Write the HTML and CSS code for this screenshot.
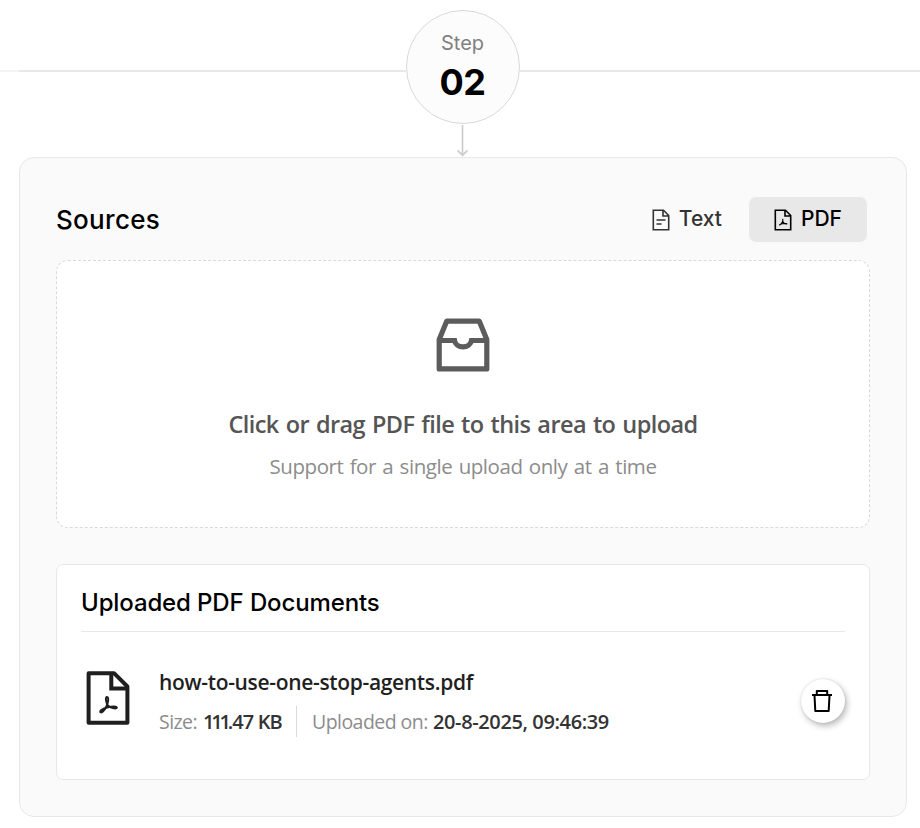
FILE: index.html
```
<!DOCTYPE html>
<html lang="en">
<head>
  <meta charset="UTF-8" />
  <meta name="viewport" content="width=device-width, initial-scale=1.0" />
  <title>Sources</title>
  <link rel="stylesheet" href="styles.css">
</head>
<body>
  <header class="step">
    <div class="step-line"></div>
    <div class="step-circle">
      <span class="step-label">Step</span>
      <span class="step-number">02</span>
    </div>
    <div class="step-line"></div>
  </header>
  <svg class="arrow" width="15" height="32" viewBox="0 0 15 32" fill="none" stroke="#cdcdcd" stroke-width="1.7">
    <path d="M7.5 0v30M2.500 25.300l5 4.900 5-4.900" />
  </svg>

  <main class="panel">
    <div class="panel-header">
      <h2>Sources</h2>
      <div class="tabs">
        <button class="tab" type="button">
          <svg width="18" height="22" viewBox="0 0 18 22" fill="none" stroke="currentColor" stroke-width="1.6">
            <path d="M1.3 1.3h10.2l5.2 5.2v14.2H1.3zM11 1.3v5.7h5.7M4.5 11h9M4.5 15h5" />
          </svg>
          <span class="tab-text">Text</span>
        </button>
        <button class="tab active" type="button">
          <svg width="18" height="22" viewBox="0 0 18 22" fill="none" stroke="currentColor" stroke-width="1.6">
            <path d="M1.3 1.3h10.2l5.2 5.2v14.2H1.3zM11 1.3v5.7h5.7" />
            <path d="M8.7 9.8c.6 2.300 0 4.200-3.500 6.500M8.800 12.400c.8 1.700 2 2.500 4.500 2.500M5.800 15.500c2-.9 4-1.300 7-.9" stroke-width="1.100" />
          </svg>
          <span class="tab-text">PDF</span>
        </button>
      </div>
    </div>

    <section class="dropzone">
      <svg class="inbox" width="54" height="54" viewBox="0 0 54 54" fill="none" stroke="#5c5c5c" stroke-width="5.2" stroke-linejoin="round">
        <path d="M3.200 21.500L10.800 3.100h32.400l7.600 18.400v29.400H3.200z" />
        <path d="M3.200 22.500h15.300a8.600 7.600 0 0 0 17 0h15.300" stroke-linejoin="miter" />
      </svg>
      <p class="drop-title">Click or drag PDF file to this area to upload</p>
      <p class="drop-hint">Support for a single upload only at a time</p>
    </section>

    <section class="documents">
      <h3>Uploaded PDF Documents</h3>
      <div class="doc">
        <svg class="doc-icon" width="44" height="54" viewBox="0 0 44 54" fill="none" stroke="#1f1f1f" stroke-width="4" stroke-linejoin="round">
          <path d="M2.600 2.200h25.400l13.400 13.300v36.300H2.600z" />
          <path d="M25.300 2.200v15.300h16.100" stroke-linejoin="miter" />
          <path d="M21.800 34.500c-2.200-4-2.500-8.500-.8-8.500 1.900 0 1.500 5.500-.8 9.700-2 4-4.300 6.500-5.700 5.500-1.300-1.200 2-3.300 7.300-4.900 4.300-1.200 8.900-1.300 9 .300.100 1.500-5.200 1.100-9-2.100z" stroke-width="2" />
        </svg>
        <div class="doc-info">
          <p class="doc-name">how-to-use-one-stop-agents.pdf</p>
          <div class="doc-meta">
            <span class="meta-label">Size:</span>
            <span class="meta-value size"><span class="ones">111</span>.47 KB</span>
            <span class="divider"></span>
            <span class="meta-label uploaded">Uploaded on:</span>
            <span class="meta-value">20-8-2025, 09:46:39</span>
          </div>
        </div>
        <button class="delete" type="button" aria-label="Delete">
          <svg width="22" height="24" viewBox="0 0 22 24" fill="none" stroke="#000" stroke-width="2" stroke-linejoin="round">
            <path d="M1 6h20M5.800 6V2h10.400v4M3.500 6.500L4.300 22h13.400l.800-15.500" />
          </svg>
        </button>
      </div>
    </section>
  </main>
</body>
</html>
```

FILE: styles.css
```
* {
  box-sizing: border-box;
}
body {
  margin: 0;
  background: #fff;
  color: #000;
  font-family: 'Open Sans', sans-serif;
}
h2, h3, p {
  margin: 0;
}
button {
  border: none;
  padding: 0;
  cursor: pointer;
}
svg {
  display: block;
  flex-shrink: 0;
}

/* step marker */
.step {
  display: flex;
  align-items: center;
  padding-top: 10px;
}
.step-line {
  flex: 0 0 406px;
  height: 2px;
  margin-top: 8px;
  background: #e8e8e8;
}
.step-line:first-child {
  background: linear-gradient(to right, #f3f3f3 19px, #e8e8e8 19px);
}
.step-circle {
  width: 114px;
  height: 114px;
  flex-shrink: 0;
  border: 1px solid #d9d9d9;
  border-radius: 50%;
  background: #fcfcfc;
  display: flex;
  flex-direction: column;
  align-items: center;
  padding: 20px 1px 0 0;
  font-family: Inter, sans-serif;
}
.step-label {
  font-size: 20px;
  line-height: 24px;
  color: #808080;
}
.step-number {
  margin-top: 5px;
  font-size: 36px;
  line-height: 44px;
  font-weight: 700;
  letter-spacing: -0.5px;
}
.arrow {
  margin: 1px 0 0 455px;
}

/* panel */
.panel {
  width: 888px;
  height: 660px;
  margin-left: 19px;
  padding: 39px 36px 36px;
  background: #fafafa;
  border: 1px solid #e8e8e8;
  border-radius: 15px;
}
.panel-header {
  display: flex;
  justify-content: space-between;
  align-items: center;
  height: 45px;
  margin-bottom: 18px;
  padding-right: 3px;
}
h2, h3 {
  font-family: Inter, sans-serif;
  font-weight: 500;
}
h2 {
  font-size: 26px;
  line-height: 32px;
  letter-spacing: 0.3px;
}
.tabs {
  display: flex;
  gap: 2px;
}
.tab {
  display: flex;
  align-items: center;
  gap: 9px;
  height: 45px;
  padding: 0 25px;
  border-radius: 7px;
  background: transparent;
  color: #333;
  font: 500 21px Inter, sans-serif;
}
.tab-text {
  padding-bottom: 2px;
}
.tab.active {
  background: #e8e8e8;
  color: #000;
}
.dropzone {
  display: flex;
  flex-direction: column;
  align-items: center;
  height: 268px;
  padding-top: 57px;
  background: #fff;
  border: 1px dashed #d9d9d9;
  border-radius: 12px;
}
.drop-title {
  margin-top: 36px;
  font-size: 23.5px;
  line-height: 32px;
  font-weight: 600;
  letter-spacing: -0.6px;
  word-spacing: 1.5px;
  color: #555;
}
.drop-hint {
  margin-top: 11px;
  font-size: 20.5px;
  line-height: 30px;
  letter-spacing: -0.45px;
  word-spacing: 1.5px;
  color: #8c8c8c;
}

/* uploaded files */
.documents {
  height: 216px;
  margin-top: 36px;
  padding: 22px 24px;
  background: #fff;
  border: 1px solid #e8e8e8;
  border-radius: 7px;
}
h3 {
  font-size: 24px;
  line-height: 32px;
  padding-bottom: 12px;
  letter-spacing: -0.12px;
  border-bottom: 1px solid #e8e8e8;
}
.doc {
  display: flex;
  margin-top: 35px;
  padding-left: 5px;
}
.doc-icon {
  margin-top: 4px;
}
.doc-info {
  flex: 1;
  padding-left: 29px;
}
.doc-name {
  font-size: 21px;
  line-height: 30px;
  font-weight: 600;
  letter-spacing: -0.33px;
  color: #1f1f1f;
}
.doc-meta {
  display: flex;
  align-items: center;
  height: 31px;
  margin-top: 9px;
  font-size: 20px;
}
.meta-label {
  width: 44px;
  font-size: 19.5px;
  letter-spacing: -0.55px;
  color: #8c8c8c;
  white-space: nowrap;
}
.meta-label.uploaded {
  width: 121px;
}
.meta-value {
  font-weight: 600;
  letter-spacing: -0.38px;
  color: #333;
  white-space: nowrap;
}
.meta-value.size {
  width: 93px;
  letter-spacing: -0.9px;
}
.ones {
  letter-spacing: -3.2px;
}
.divider {
  width: 1px;
  height: 31px;
  margin-right: 15px;
  background: #d9d9d9;
}
.delete {
  display: flex;
  align-items: center;
  justify-content: center;
  width: 44px;
  height: 44px;
  margin-top: 12px;
  padding-right: 2px;
  border-radius: 50%;
  background: #fff;
  box-shadow: 2px 3px 6px rgba(0, 0, 0, 0.28), 0 0 2px rgba(0, 0, 0, 0.15);
}
```
